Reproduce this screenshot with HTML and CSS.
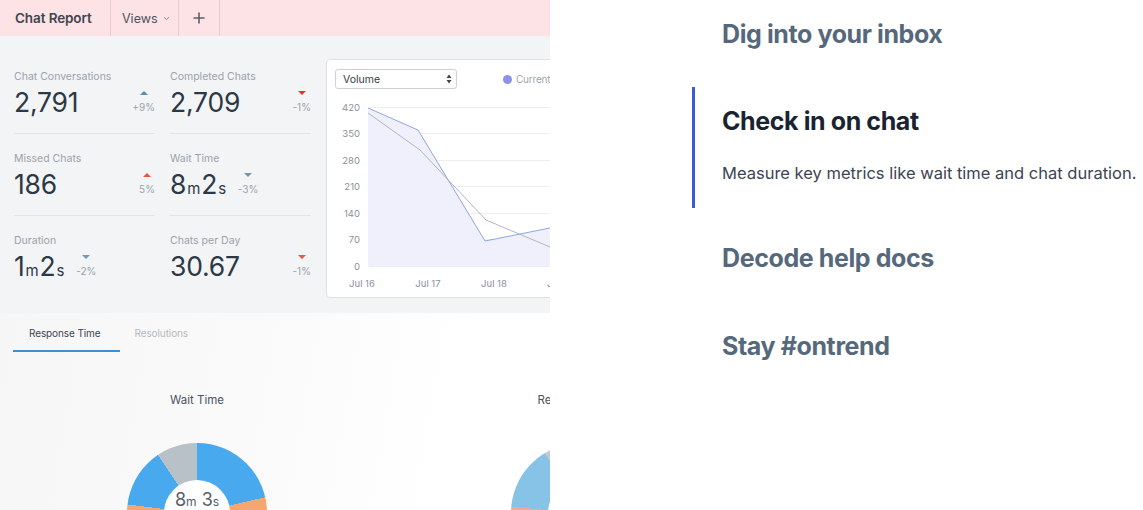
FILE: index.html
```html
<!DOCTYPE html>
<html>
<head>
<meta charset="utf-8">
<link rel="stylesheet" href="styles.css">
</head>
<body>
<div class="page">
  <div class="app">
    <div class="topbar">
      <div class="tb-item tb-title">Chat Report</div>
      <div class="tb-item tb-views">Views
        <svg class="chev" width="7" height="5" viewBox="0 0 7 5"><path d="M1 1.2 L3.5 3.6 L6 1.2" fill="none" stroke="#9a8f93" stroke-width="1"/></svg>
      </div>
      <div class="tb-item tb-add">
        <svg width="12" height="12" viewBox="0 0 12 12"><path d="M6 0.5 V11.5 M0.5 6 H11.5" stroke="#5a5f66" stroke-width="1.6"/></svg>
      </div>
    </div>

    <div class="summary">
      <div class="stats">
        <div class="stat">
          <div class="stat-label">Chat Conversations</div>
          <div class="stat-row">
            <div class="stat-value">2,791</div>
            <div class="delta"><span class="tri up t-steel"></span><span class="delta-text">+9%</span></div>
          </div>
        </div>
        <div class="stat">
          <div class="stat-label">Completed Chats</div>
          <div class="stat-row">
            <div class="stat-value">2,709</div>
            <div class="delta"><span class="tri down t-red"></span><span class="delta-text">-1%</span></div>
          </div>
        </div>
        <div class="stat">
          <div class="stat-label">Missed Chats</div>
          <div class="stat-row">
            <div class="stat-value">186</div>
            <div class="delta"><span class="tri up t-orange"></span><span class="delta-text">5%</span></div>
          </div>
        </div>
        <div class="stat">
          <div class="stat-label">Wait Time</div>
          <div class="stat-row">
            <div class="stat-value">8<span class="unit">m</span>2<span class="unit">s</span></div>
            <div class="delta inline"><span class="tri down t-slate"></span><span class="delta-text">-3%</span></div>
          </div>
        </div>
        <div class="stat last">
          <div class="stat-label">Duration</div>
          <div class="stat-row">
            <div class="stat-value">1<span class="unit">m</span>2<span class="unit">s</span></div>
            <div class="delta inline"><span class="tri down t-blue"></span><span class="delta-text">-2%</span></div>
          </div>
        </div>
        <div class="stat last">
          <div class="stat-label">Chats per Day</div>
          <div class="stat-row">
            <div class="stat-value">30.67</div>
            <div class="delta"><span class="tri down t-orange"></span><span class="delta-text">-1%</span></div>
          </div>
        </div>
      </div>

      <div class="chart-card">
        <div class="chart-head">
          <div class="select">Volume
            <svg width="6" height="10" viewBox="0 0 6 10"><path d="M3 0.5 L5.5 4 H0.5 Z M3 9.5 L5.5 6 H0.5 Z" fill="#444"/></svg>
          </div>
          <div class="legend"><span class="dot"></span>Current</div>
        </div>
        <svg class="chart" width="258" height="198" viewBox="0 0 258 198">
          <g stroke="#eceef1" stroke-width="1">
            <line x1="42" y1="8.5" x2="258" y2="8.5"/>
            <line x1="42" y1="34.5" x2="258" y2="34.5"/>
            <line x1="42" y1="61.5" x2="258" y2="61.5"/>
            <line x1="42" y1="87.5" x2="258" y2="87.5"/>
            <line x1="42" y1="114.5" x2="258" y2="114.5"/>
            <line x1="42" y1="140.5" x2="258" y2="140.5"/>
            <line x1="42" y1="167.5" x2="258" y2="167.5"/>
          </g>
          <polygon points="41,9 91,31 158,142 223,129 258,122 258,167 41,167" fill="#eff0fb"/>
          <polyline points="41,14 93,51 159,121 223,148 258,163" fill="none" stroke="#b3b6be" stroke-width="1"/>
          <polyline points="41,9 91,31 158,142 223,129 258,122" fill="none" stroke="#8ea6e4" stroke-width="1"/>
          <g class="ax" text-anchor="end">
            <text x="33" y="12">420</text>
            <text x="33" y="38">350</text>
            <text x="33" y="65">280</text>
            <text x="33" y="91">210</text>
            <text x="33" y="118">140</text>
            <text x="33" y="144">70</text>
            <text x="33" y="171">0</text>
          </g>
          <g class="ax" text-anchor="middle">
            <text x="35" y="188">Jul 16</text>
            <text x="101" y="188">Jul 17</text>
            <text x="167" y="188">Jul 18</text>
            <text x="233" y="188">Jul 19</text>
          </g>
        </svg>
      </div>
    </div>

    <div class="lower">
      <div class="tabs">
        <div class="tab active">Response Time</div>
        <div class="tab">Resolutions</div>
      </div>
      <div class="donuts">
        <div class="donut-col">
          <div class="donut-title">Wait Time</div>
          <div class="donut d1">
            <div class="donut-hole"><span class="dv">8<span class="dunit">m</span> 3<span class="dunit">s</span></span></div>
          </div>
        </div>
        <div class="donut-col">
          <div class="donut-title">Resolution Time</div>
          <div class="donut d2">
            <div class="donut-hole"></div>
          </div>
        </div>
      </div>
    </div>
  </div>

  <div class="features">
    <div class="feature">
      <h3 class="f-title">Dig into your inbox</h3>
    </div>
    <div class="feature active">
      <h3 class="f-title">Check in on chat</h3>
      <p class="f-desc">Measure key metrics like wait time and chat duration.</p>
    </div>
    <div class="feature">
      <h3 class="f-title">Decode help docs</h3>
    </div>
    <div class="feature">
      <h3 class="f-title">Stay #ontrend</h3>
    </div>
  </div>
</div>
</body>
</html>
```

FILE: styles.css
```css
html, body {
  margin: 0;
  padding: 0;
  background: #ffffff;
  overflow: hidden;
}

.page {
  display: flex;
  width: 1143px;
  height: 510px;
  font-family: "Inter", "Noto Sans", sans-serif;
}

/* ---------- left app screenshot ---------- */
.app {
  width: 550px;
  height: 510px;
  overflow: hidden;
  flex: none;
  display: flex;
  flex-direction: column;
}

.topbar {
  height: 36px;
  flex: none;
  background: #fde2e6;
  display: flex;
  align-items: stretch;
}

.tb-item {
  display: flex;
  align-items: center;
  border-right: 1px solid #f2c8cf;
  box-sizing: border-box;
}

.tb-title {
  width: 111px;
  padding-left: 15px;
  font-size: 13.5px;
  font-weight: 600;
  color: #3d454f;
  letter-spacing: -0.1px;
}

.tb-views {
  width: 68px;
  padding-left: 11px;
  font-size: 12.5px;
  color: #4d545c;
  gap: 5px;
}

.tb-add {
  width: 41px;
  justify-content: center;
}

.summary {
  height: 277px;
  flex: none;
  background: #f3f4f6;
  display: flex;
  align-items: flex-start;
  padding: 23px 0 0 14px;
  box-sizing: border-box;
}

.stats {
  margin-top: 11px;
  display: grid;
  grid-template-columns: 141px 141px;
  column-gap: 15px;
  row-gap: 18px;
}

.stat {
  border-bottom: 1px solid #e2e4e8;
  padding-bottom: 16px;
}

.stat.last {
  border-bottom-color: transparent;
}

.stat-label {
  font-size: 10.5px;
  line-height: 14px;
  color: #9ca2aa;
  white-space: nowrap;
}

.stat-row {
  margin-top: 3px;
  height: 30px;
  display: flex;
  align-items: flex-start;
}

.stat-value {
  font-size: 26.5px;
  line-height: 30px;
  height: 30px;
  color: #2c3845;
  letter-spacing: -0.2px;
  white-space: nowrap;
}

.unit {
  font-size: 15px;
  line-height: 15px;
  margin: 0 1px;
}

.delta {
  margin-left: auto;
  padding-top: 4px;
  display: flex;
  flex-direction: column;
  align-items: center;
  gap: 6px;
}

.delta.inline {
  margin-left: 11px;
}

.delta-text {
  font-size: 10px;
  line-height: 12px;
  color: #9ca2aa;
}

.tri {
  width: 0;
  height: 0;
  border-left: 4px solid transparent;
  border-right: 4px solid transparent;
}

.tri.up { border-bottom: 4px solid currentColor; }
.tri.down { border-top: 4px solid currentColor; }

.t-steel { color: #5b8db2; }
.t-red { color: #e0362c; }
.t-orange { color: #e8573c; }
.t-slate { color: #7b93a8; }
.t-blue { color: #6a9cc2; }

.chart-card {
  margin-left: 15px;
  width: 260px;
  height: 239px;
  flex: none;
  background: #ffffff;
  border: 1px solid #dee2e7;
  border-radius: 4px;
  box-sizing: border-box;
}

.chart-head {
  display: flex;
  align-items: center;
  padding: 9px 0 0 8px;
}

.select {
  width: 122px;
  height: 20px;
  box-sizing: border-box;
  border: 1px solid #cdd2d8;
  border-radius: 3px;
  display: flex;
  align-items: center;
  justify-content: space-between;
  padding: 0 4px 0 7px;
  font-size: 10.5px;
  color: #333a42;
  background: #fff;
}

.legend {
  margin-left: 46px;
  display: flex;
  align-items: center;
  gap: 4px;
  font-size: 10px;
  letter-spacing: -0.2px;
  color: #a0a6ad;
  white-space: nowrap;
}

.dot {
  width: 9px;
  height: 9px;
  border-radius: 50%;
  background: #8e90ea;
}

.chart {
  display: block;
  margin-top: 10px;
}

.ax text {
  font-family: "Inter", "Noto Sans", sans-serif;
  font-size: 9.5px;
  fill: #8a919a;
}

.lower {
  flex: 1;
  background: linear-gradient(100deg, #f6f6f7 0%, #fafafa 45%, #ffffff 80%);
}

.tabs {
  display: flex;
  padding-left: 13px;
  height: 39px;
}

.tab {
  padding: 3px 16px 0 16px;
  display: flex;
  align-items: center;
  font-size: 10px;
  letter-spacing: -0.1px;
  color: #b3b9c0;
  border-bottom: 2px solid transparent;
}

.tab.active {
  color: #3b444e;
  border-bottom-color: #3a8fd5;
  padding-right: 19px;
}

.tab + .tab {
  padding-left: 15px;
}

.donuts {
  display: grid;
  grid-template-columns: 384px 384px;
  padding-left: 5px;
  margin-top: 40px;
}

.donut-col {
  display: flex;
  flex-direction: column;
  align-items: center;
}

.donut-title {
  font-size: 11.5px;
  line-height: 16px;
  color: #4a535c;
  white-space: nowrap;
}

.donut {
  margin-top: 35px;
  width: 140px;
  height: 140px;
  border-radius: 50%;
  display: flex;
  align-items: center;
  justify-content: center;
}

.d1 {
  background: conic-gradient(#48a9ef 0deg 77deg, #f6a670 77deg 277deg, #48a9ef 277deg 326deg, #b8c0c8 326deg 360deg);
}

.d2 {
  background: conic-gradient(#87c3e7 0deg 140deg, #efa9a2 140deg 275deg, #87c3e7 275deg 329deg, #c3c9cf 329deg 360deg);
}

.donut-hole {
  width: 66px;
  height: 66px;
  border-radius: 50%;
  background: #ffffff;
  display: flex;
  justify-content: center;
  align-items: flex-start;
  padding-top: 11px;
  box-sizing: border-box;
}

.dv {
  font-size: 18px;
  line-height: 18px;
  color: #555d66;
  white-space: nowrap;
}

.dunit {
  font-size: 12px;
}

/* ---------- right feature list ---------- */
.features {
  margin-left: 142px;
  margin-top: -1px;
  display: flex;
  flex-direction: column;
  gap: 14px;
}

.feature {
  border-left: 3px solid transparent;
  padding: 19px 0 23px 27px;
}

.feature.active {
  border-left-color: #3b5bdb;
  padding-top: 18px;
}

.feature.active + .feature {
  padding-top: 20px;
}

.f-title {
  margin: 0;
  font-size: 25px;
  line-height: 32px;
  font-weight: 700;
  letter-spacing: -0.4px;
  color: #56687c;
  white-space: nowrap;
}

.feature.active .f-title {
  color: #1a2430;
}

.f-desc {
  margin: 24px 0 0 0;
  font-size: 16.5px;
  line-height: 24px;
  color: #3b4552;
  white-space: nowrap;
}
```
